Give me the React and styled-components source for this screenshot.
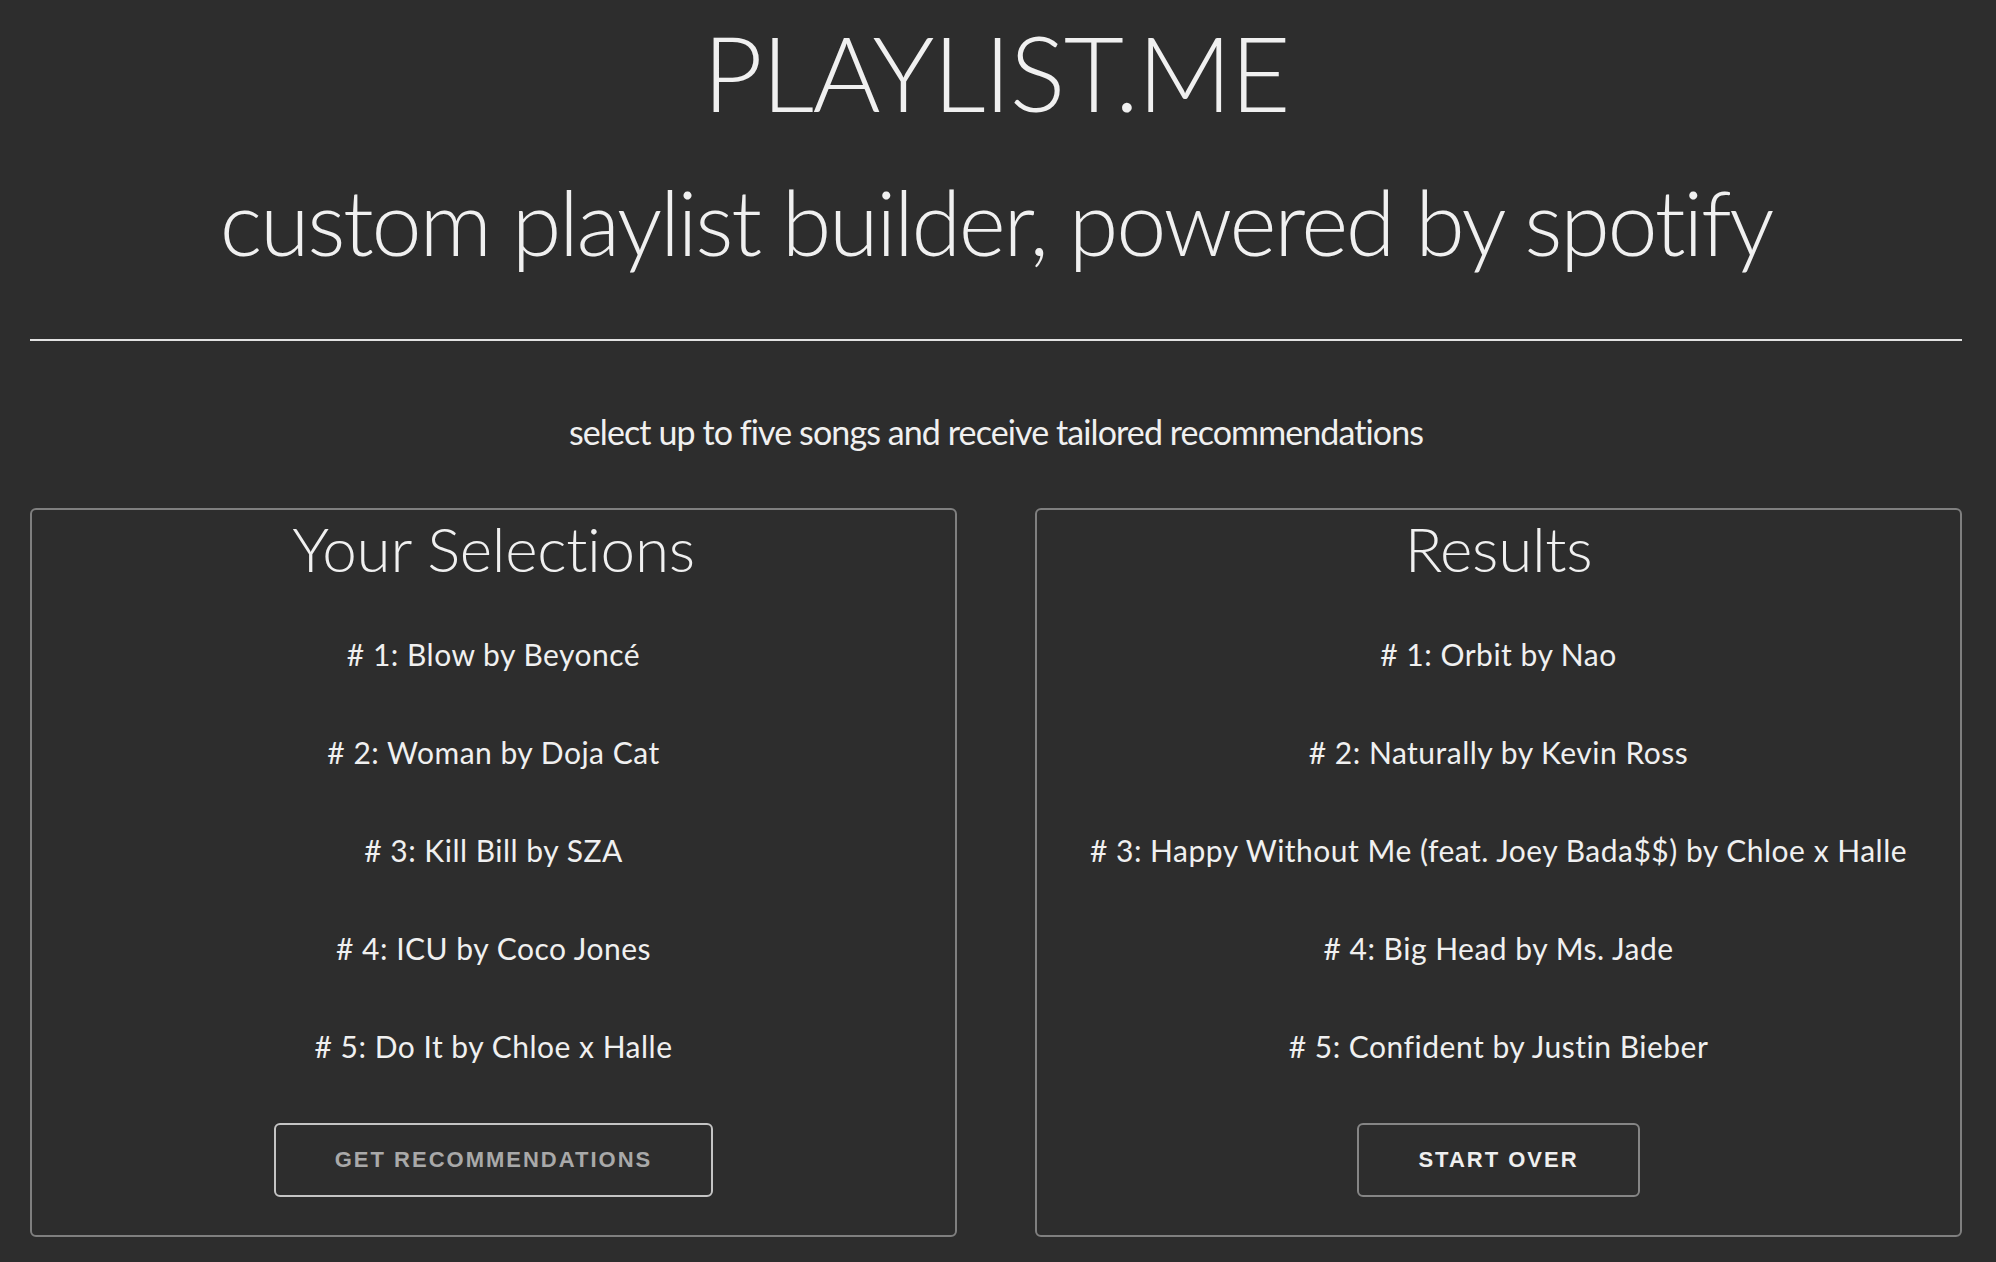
import styled, { createGlobalStyle } from 'styled-components';

const GlobalStyle = createGlobalStyle`
	html, body {
		margin: 0;
		padding: 0;
		background-color: #2d2d2d;
	}
	body {
		font-family: Lato, 'Open Sans', sans-serif;
		color: #f0f0f0;
	}
`;

const selections = [
	'Blow by Beyoncé',
	'Woman by Doja Cat',
	'Kill Bill by SZA',
	'ICU by Coco Jones',
	'Do It by Chloe x Halle',
];

const results = [
	'Orbit by Nao',
	'Naturally by Kevin Ross',
	'Happy Without Me (feat. Joey Bada$$) by Chloe x Halle',
	'Big Head by Ms. Jade',
	'Confident by Justin Bieber',
];

function Panel({ title, items, buttonLabel, muted }) {
	return (
		<Card>
			<CardTitle>{title}</CardTitle>
			<List>
				{items.map((song, i) => (
					<Item key={song}>
						# {i + 1}: {song}
					</Item>
				))}
			</List>
			<Button $muted={muted}>{buttonLabel}</Button>
		</Card>
	);
}

function App() {
	return (
		<Page>
			<GlobalStyle />
			<Title>PLAYLIST.ME</Title>
			<Subtitle>custom playlist builder, powered by spotify</Subtitle>
			<Divider />
			<Instructions>
				select up to five songs and receive tailored recommendations
			</Instructions>
			<Panels>
				<Panel
					title='Your Selections'
					items={selections}
					buttonLabel='Get Recommendations'
					muted
				/>
				<Panel title='Results' items={results} buttonLabel='Start Over' />
			</Panels>
		</Page>
	);
}

export default App;

const Page = styled.div`
	display: flex;
	flex-direction: column;
	padding: 20px 34px 26px 30px;
	text-align: center;
`;

const Title = styled.h1`
	margin: 0;
	font-size: 104px;
	line-height: 104px;
	font-weight: 300;
	letter-spacing: -1.5px;
`;

const Subtitle = styled.h2`
	margin: 52px 0 0;
	font-size: 90px;
	line-height: 90px;
	font-weight: 300;
	letter-spacing: -2.3px;
`;

const Divider = styled.hr`
	margin: 73px 0 0;
	height: 2px;
	border: none;
	background-color: #e2e2e2;
`;

const Instructions = styled.p`
	margin: 74px 0 0;
	font-size: 34px;
	line-height: 34px;
	font-weight: 400;
	letter-spacing: -0.9px;
`;

const Panels = styled.div`
	display: grid;
	grid-template-columns: 1fr 1fr;
	gap: 78px;
	margin-top: 59px;
`;

const Card = styled.section`
	display: flex;
	flex-direction: column;
	align-items: center;
	padding: 7px 0 38px;
	border: 2px solid #7f7f7f;
	border-radius: 6px;
`;

const CardTitle = styled.h3`
	margin: 0;
	font-size: 62px;
	line-height: 62px;
	font-weight: 300;
	letter-spacing: -0.3px;
`;

const List = styled.ul`
	list-style: none;
	margin: 26px 0 0;
	padding: 0;
`;

const Item = styled.li`
	font-size: 30px;
	line-height: 98px;
	font-weight: 400;
	letter-spacing: 0.5px;
`;

const Button = styled.button`
	box-sizing: border-box;
	height: 74px;
	margin-top: 28px;
	padding: 0 59px;
	background: transparent;
	border: 2px solid ${(p) => (p.$muted ? '#c4c4c4' : '#858585')};
	border-radius: 6px;
	color: ${(p) => (p.$muted ? '#a9a9a9' : '#efefef')};
	font-family: 'Liberation Sans', Arial, sans-serif;
	font-size: 22px;
	font-weight: 700;
	letter-spacing: 2px;
	text-transform: uppercase;
	cursor: pointer;
`;
